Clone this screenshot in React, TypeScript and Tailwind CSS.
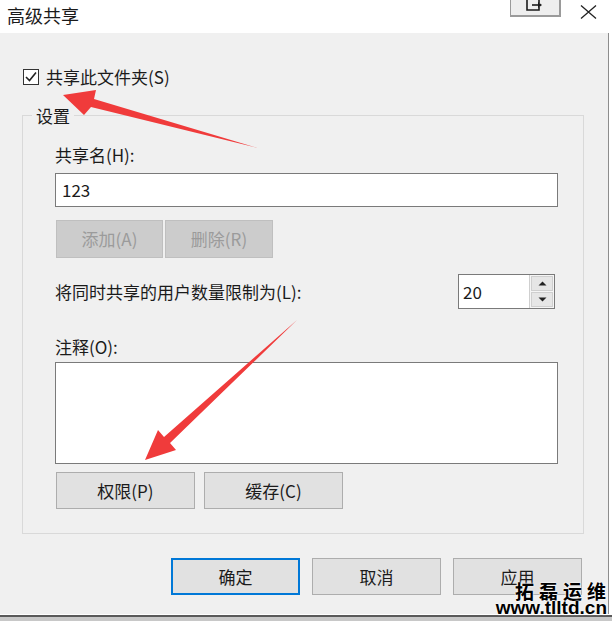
import React from "react";

const F = { fontFamily: '"Noto Sans CJK SC", "Microsoft YaHei", sans-serif' };

function Btn({ label, w, disabled, primary, h = 37 }: { label: string; w: number; disabled?: boolean; primary?: boolean; h?: number }) {
  const cls = disabled
    ? "bg-[#cccccc] border border-[#bfbfbf] text-[#9b9b9b]"
    : primary
    ? "bg-[#e1e1e1] border-2 border-[#0078d7] text-[#1b1b1b]"
    : "bg-[#e1e1e1] border border-[#adadad] text-[#1b1b1b]";
  return (
    <div className={`flex items-center justify-center text-[17px] ${cls}`} style={{ width: w, height: h }}>
      {label}
    </div>
  );
}

export default function App() {
  return (
    <div className="relative w-[612px] h-[621px] bg-white flex flex-col overflow-hidden text-[#1b1b1b]" style={F}>
      {/* title bar */}
      <div className="h-[33px] flex items-start shrink-0 bg-white">
        <div className="pl-[7px] pt-[3px] text-[18px] leading-[24px]">高级共享</div>
        <div className="flex-1" />
        <div className="w-[51px] h-[17px] mr-[19px] bg-[#eeeeee] border border-t-0 border-[#9a9a9a] border-b-2 border-r-2 flex justify-center">
          <svg width="20" height="12" viewBox="0 0 20 12">
            <path d="M2 0 V10 H14 V7 M14 3 V0" fill="none" stroke="#1b1b1b" strokeWidth="1.6" />
            <path d="M7 5 H14" stroke="#1b1b1b" strokeWidth="1.6" />
            <path d="M13 2 L17 5 L13 8 Z" fill="#1b1b1b" />
          </svg>
        </div>
        <div className="mt-[5px] mr-[15px]">
          <svg width="17" height="14" viewBox="0 0 17 14">
            <path d="M1 0.5 L16 13.5 M16 0.5 L1 13.5" stroke="#222" strokeWidth="1.3" />
          </svg>
        </div>
      </div>

      <div className="flex flex-1 min-h-0">
        {/* body */}
        <div className="w-[609px] bg-[#f0f0f0] border-r border-[#8d8d8d] flex flex-col">
          {/* checkbox row */}
          <div className="mt-[34px] h-[20px] flex items-center pl-[23px]">
            <div className="w-[16px] h-[16px] border border-[#333] bg-white flex items-center justify-center">
              <svg width="14" height="14" viewBox="0 0 14 14">
                <path d="M2 7 L5.5 10.5 L12 2.5" fill="none" stroke="#222" strokeWidth="1.6" />
              </svg>
            </div>
            <span className="ml-[7px] text-[17px] leading-[20px]">共享此文件夹(S)</span>
          </div>

          {/* group box */}
          <div className="mt-[28px] ml-[22px] w-[562px] border border-[#d9d9d9] flex flex-col pl-[32px] pr-[25px] pb-[24px]">
            <div className="-mt-[10px] -ml-[23px] w-fit h-[20px] leading-[20px] bg-[#f0f0f0] px-[4px] text-[17px]">设置</div>
            <div className="mt-[19px] h-[20px] leading-[20px] text-[17px]">共享名(H):</div>
            <div className="mt-[8px] h-[34px] bg-white border border-[#7a7a7a] flex items-center pl-[6px] text-[17px]">123</div>
            <div className="mt-[13px] flex gap-[2px] ml-[1px]">
              <Btn label="添加(A)" w={107} h={38} disabled />
              <Btn label="删除(R)" w={108} h={38} disabled />
            </div>
            <div className="mt-[16px] h-[35px] flex items-center justify-between">
              <span className="text-[17px]">将同时共享的用户数量限制为(L):</span>
              <div className="mr-[3px] w-[97px] h-[35px] bg-white border border-[#7a7a7a] flex">
                <div className="flex-1 flex items-center pl-[4px] text-[17px]">20</div>
                <div className="w-[25px] flex flex-col gap-[1px] p-[1px] border-l border-[#cfcfcf] bg-[#f5f5f5]">
                  <div className="flex-1 bg-[#e6e6e6] border border-[#cfcfcf] flex items-center justify-center">
                    <svg width="9" height="5" viewBox="0 0 9 5"><path d="M0.5 4.5 L4.5 0.5 L8.5 4.5 Z" fill="#222" /></svg>
                  </div>
                  <div className="flex-1 bg-[#e6e6e6] border border-[#cfcfcf] flex items-center justify-center">
                    <svg width="9" height="5" viewBox="0 0 9 5"><path d="M0.5 0.5 L4.5 4.5 L8.5 0.5 Z" fill="#222" /></svg>
                  </div>
                </div>
              </div>
            </div>
            <div className="mt-[28px] h-[20px] leading-[20px] text-[17px]">注释(O):</div>
            <div className="mt-[5px] h-[102px] bg-white border border-[#7a7a7a]" />
            <div className="mt-[8px] flex gap-[9px] ml-[1px]">
              <Btn label="权限(P)" w={139} />
              <Btn label="缓存(C)" w={139} />
            </div>
          </div>

          {/* bottom buttons */}
          <div className="mt-[24px] flex justify-end gap-[12px] pr-[26px]">
            <Btn label="确定" w={129} primary />
            <Btn label="取消" w={129} />
            <Btn label="应用" w={129} />
          </div>
          <div className="flex-1" />
        </div>
        <div className="flex-1 bg-white" />
      </div>

      {/* bottom frame */}
      <div className="h-[7px] shrink-0 flex flex-col">
        <div className="h-[1px] bg-white" />
        <div className="h-[2px] bg-[#5a5a5a]" />
        <div className="flex-1 bg-[#c8c8c8]" />
      </div>

      {/* red arrows overlay */}
      <svg className="absolute left-0 top-0 pointer-events-none" width="612" height="621">
        <polygon points="63,95 96,90 94,99 258,148 91,107 84,115" fill="#f03b3b" />
        <polygon points="145,460 158,430 164,437 297,320 170,443 176,450" fill="#f03b3b" />
      </svg>

      {/* watermark */}
      <div className="absolute right-[5px] bottom-[4px] flex flex-col items-end text-black [text-shadow:0_0_2px_#fff,0_0_2px_#fff]">
        <div className="text-[19px] leading-[17px] font-bold tracking-[5px] pr-[1px]" style={{ fontFamily: '"Noto Sans CJK SC", serif', marginRight: -5 }}>拓磊运维</div>
        <div className="text-[19px] leading-[18px] font-bold" style={{ fontFamily: '"Liberation Sans", Arial, sans-serif' }}>www.tlltd.cn</div>
      </div>
    </div>
  );
}
